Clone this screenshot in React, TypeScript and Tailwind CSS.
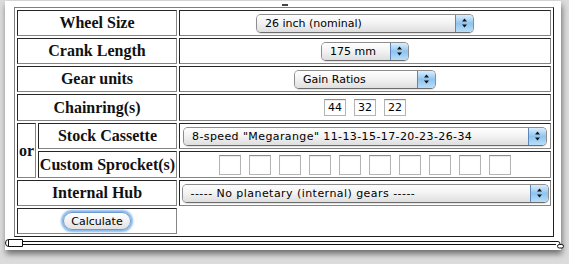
import type { ReactNode } from "react";

const serif = "font-['Liberation_Serif','Times_New_Roman',serif]";
const ui = "font-['DejaVu_Sans','Lucida_Grande',sans-serif]";

function Cell({ className = "", children }: { className?: string; children?: ReactNode }) {
    return (
        <div
            className={`flex items-center justify-center border border-t-[#262626] border-l-[#262626] border-b-[#858585] border-r-[#858585] ${className}`}
        >
            {children}
        </div>
    );
}

function Label({ className = "", children }: { className?: string; children: ReactNode }) {
    return (
        <Cell className={`${serif} text-[16px] font-bold text-[#111] ${className}`}>{children}</Cell>
    );
}

function Arrows() {
    return (
        <svg width="7" height="10" viewBox="0 0 7 10">
            <path d="M3.5 0.5 L6 3.5 L1 3.5 Z" fill="#111" />
            <path d="M1 6.5 L6 6.5 L3.5 9.5 Z" fill="#111" />
        </svg>
    );
}

function AquaSelect({
    label,
    className,
    textClass = "",
}: {
    label: string;
    className: string;
    textClass?: string;
}) {
    return (
        <div
            className={`flex h-[19px] overflow-hidden rounded-[5px] border border-[#8e8e8e] border-b-[#6c6c6c] shadow-[0_1px_1px_rgba(0,0,0,0.12)] ${className}`}
        >
            <span
                className={`${ui} flex flex-1 items-center whitespace-nowrap bg-gradient-to-b from-white via-[#f2f2f2] to-[#dedede] pl-[8px] text-[11px] leading-none text-black ${textClass}`}
            >
                {label}
            </span>
            <span className="flex w-[18px] items-center justify-center border-l border-[#5f86b8] bg-gradient-to-b from-[#dbeefc] via-[#8ec4ef] to-[#b9def8]">
                <Arrows />
            </span>
        </div>
    );
}

function Box({ value, className }: { value?: string; className: string }) {
    return (
        <div
            className={`${ui} flex w-[22px] items-center border border-[#b4b4b4] border-t-[#8c8c8c] bg-white pl-[3px] text-[11px] leading-none text-black shadow-[inset_0_1px_1px_rgba(0,0,0,0.08)] ${className}`}
        >
            {value}
        </div>
    );
}

export default function App() {
    const sprockets = Array.from({ length: 10 }, (_, i) => i);

    return (
        <div className="h-[264px] w-[569px] overflow-hidden bg-[#dcdcdc] pl-[5px] pt-[1px]">
            <div className="flex h-[249px] w-[556px] flex-col bg-white shadow-[1px_4px_6px_rgba(0,0,0,0.5)]">
                <div className="h-[6px] shrink-0">
                    <div className="ml-[277px] mt-[3px] h-[2px] w-[6px] bg-[#444]" />
                </div>

                <div className="ml-[9px] grid w-[540px] grid-cols-[19px_139px_372px] grid-rows-[26px_26px_26px_27px_26px_27px_26px_26px] gap-[2px] border border-t-[#7f7f7f] border-l-[#7f7f7f] border-b-[#1e1e1e] border-r-[#1e1e1e] p-[2px]">
                    <Label className="col-span-2">Wheel Size</Label>
                    <Cell>
                        <AquaSelect label="26 inch (nominal)" className="w-[218px]" />
                    </Cell>

                    <Label className="col-span-2">Crank Length</Label>
                    <Cell>
                        <AquaSelect label="175 mm" className="w-[88px]" />
                    </Cell>

                    <Label className="col-span-2">Gear units</Label>
                    <Cell>
                        <AquaSelect label="Gain Ratios" className="w-[142px]" />
                    </Cell>

                    <Label className="col-span-2">Chainring(s)</Label>
                    <Cell className="gap-[8px]">
                        <Box value="44" className="h-[17px]" />
                        <Box value="32" className="h-[17px]" />
                        <Box value="22" className="h-[17px]" />
                    </Cell>

                    <Label className="row-span-2">or</Label>
                    <Label>Stock Cassette</Label>
                    <Cell>
                        <AquaSelect
                            label={'8-speed "Megarange" 11-13-15-17-20-23-26-34'}
                            className="w-[364px]"
                            textClass="tracking-[0.4px]"
                        />
                    </Cell>

                    <Label>Custom Sprocket(s)</Label>
                    <Cell className="gap-[8px]">
                        {sprockets.map((i) => (
                            <Box key={i} className="h-[20px]" />
                        ))}
                    </Cell>

                    <Label className="col-span-2">Internal Hub</Label>
                    <Cell>
                        <AquaSelect
                            label="----- No planetary (internal) gears -----"
                            className="w-[367px]"
                            textClass="tracking-[0.45px]"
                        />
                    </Cell>

                    <Cell className="col-span-2">
                        <button
                            className={`${ui} h-[18px] w-[68px] rounded-full border border-[#6b9bd0] bg-gradient-to-b from-white via-[#f1f1f1] to-[#e2e2e2] text-[11px] leading-none text-black shadow-[0_0_2px_2px_rgba(96,160,226,0.75)]`}
                        >
                            Calculate
                        </button>
                    </Cell>
                </div>

                <svg width="564" height="12" viewBox="0 0 564 12" className="mt-[1px] shrink-0 overflow-visible">
                    <line x1="17" y1="3.5" x2="553" y2="3.5" stroke="#111" />
                    <line x1="17" y1="6.5" x2="551" y2="6.5" stroke="#111" />
                    <path d="M3.5 1.5 H17.5 V8.5 H3.5 Q0.5 8.5 0.5 5 Q0.5 1.5 3.5 1.5 Z" fill="white" stroke="#111" />
                    <line x1="3.5" y1="1.5" x2="3.5" y2="8.5" stroke="#111" />
                    <path d="M553 3.5 Q555 3.5 555 6 V7" fill="none" stroke="#111" />
                    <rect x="552.5" y="6.5" width="6" height="3.5" rx="1.7" fill="white" stroke="#111" />
                </svg>
            </div>
        </div>
    );
}
